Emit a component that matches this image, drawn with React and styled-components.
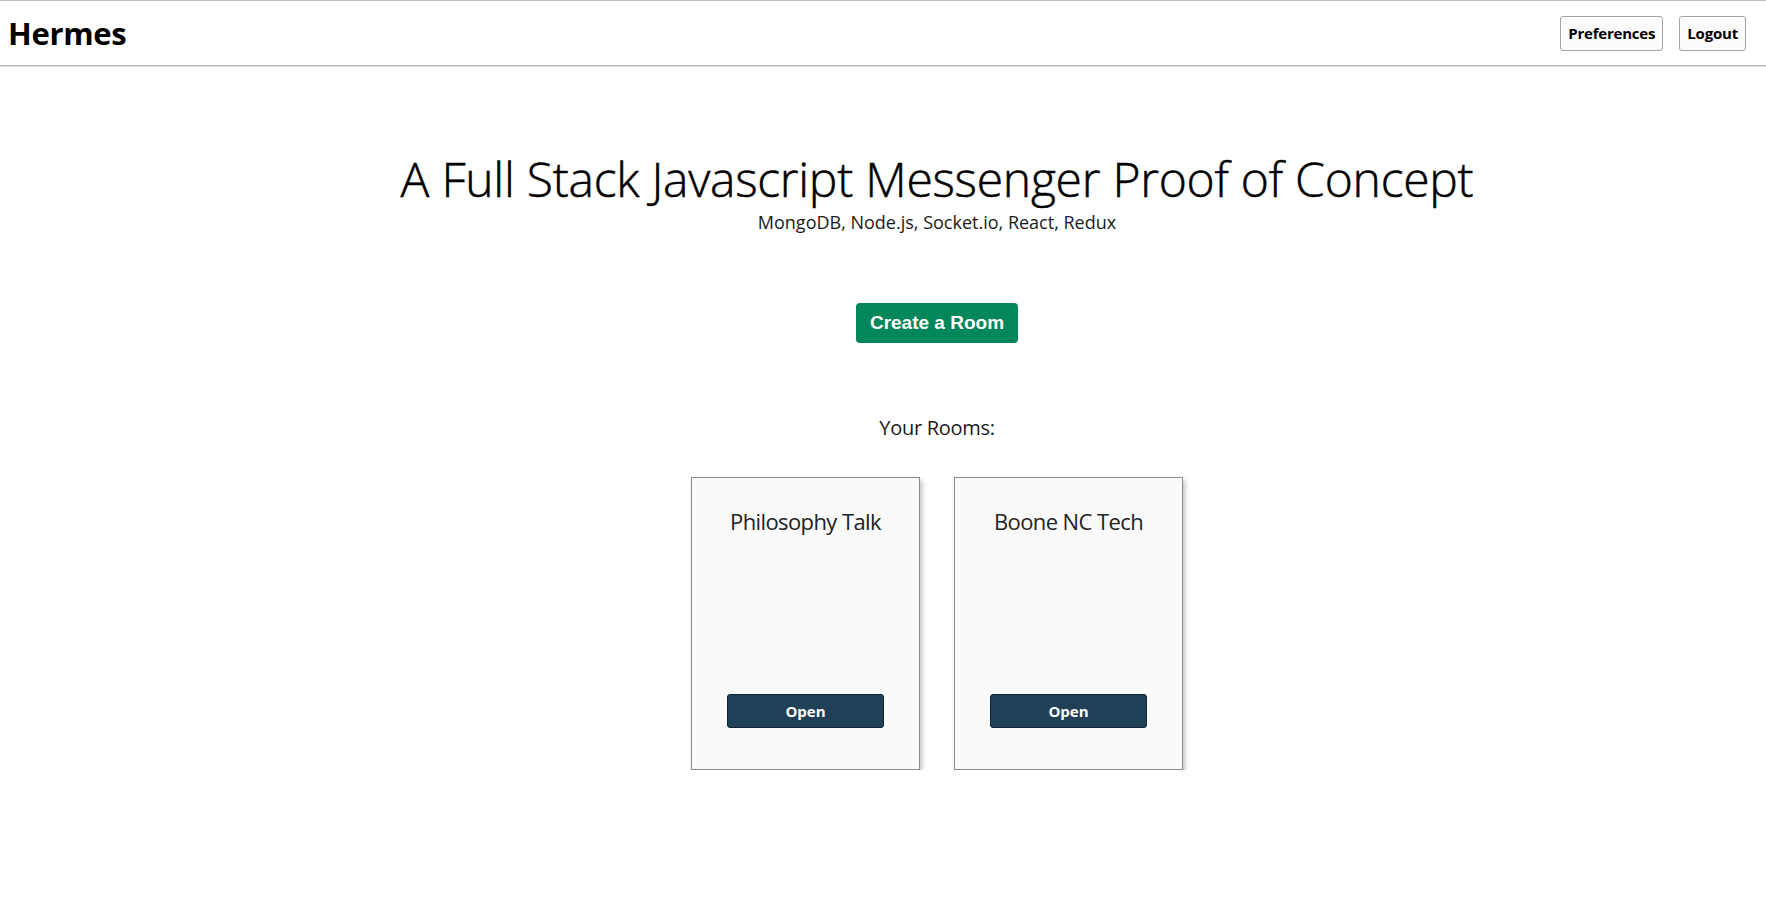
import React from "react";
import styled, { createGlobalStyle } from "styled-components";

const GlobalStyle = createGlobalStyle`
  html, body {
    margin: 0;
    padding: 0;
    background: #ffffff;
  }
  body {
    font-family: "Open Sans", "Noto Sans", sans-serif;
    color: #000;
  }
  * { box-sizing: border-box; }
`;

const Header = styled.header`
  display: flex;
  align-items: center;
  justify-content: space-between;
  height: 66px;
  padding: 0 20px 0 8px;
  border-top: 1px solid #bdbdbd;
  border-bottom: 1px solid #b3b3b3;
  box-shadow: 0 1px 0 #e2e2e2;
`;

const Brand = styled.div`
  font-size: 31px;
  font-weight: 700;
  letter-spacing: -0.3px;
  line-height: 1;
  margin-top: 1px;
`;

const Nav = styled.nav`
  display: flex;
  gap: 16px;
`;

const NavButton = styled.button`
  height: 35px;
  padding: 0 7px;
  border: 1px solid #a3a3a3;
  border-radius: 3px;
  background: #fbfbfb;
  font-family: "Open Sans", "Noto Sans", sans-serif;
  font-size: 15px;
  font-weight: 700;
  letter-spacing: -0.2px;
  color: #000;
  cursor: pointer;
`;

const Main = styled.main`
  display: flex;
  flex-direction: column;
  align-items: center;
  padding-left: 108px;
`;

const Title = styled.h1`
  margin: 84px 0 0;
  font-size: 48px;
  font-weight: 300;
  letter-spacing: -0.25px;
  line-height: 1.2;
  color: #000;
  -webkit-text-stroke: 0.5px #000;
`;

const Subtitle = styled.p`
  margin: 4px 0 0;
  font-size: 18px;
  font-weight: 400;
  line-height: 1.2;
  color: #1a1a1a;
`;

const CreateButton = styled.button`
  margin-top: 70px;
  height: 40px;
  padding: 0 14px;
  border: none;
  border-radius: 4px;
  background: #02875a;
  color: #fff;
  font-family: "Liberation Sans", Arial, sans-serif;
  font-size: 19px;
  font-weight: 700;
  cursor: pointer;
`;

const SectionLabel = styled.h2`
  margin: 72px 0 0;
  font-size: 20px;
  font-weight: 400;
  letter-spacing: -0.3px;
  line-height: 1.25;
  color: #1a1a1a;
`;

const RoomList = styled.div`
  display: flex;
  gap: 34px;
  margin-top: 37px;
`;

const RoomCard = styled.div`
  display: flex;
  flex-direction: column;
  align-items: center;
  justify-content: space-between;
  width: 229px;
  height: 293px;
  padding: 30px 0 41px;
  border: 1px solid #8c8c8c;
  background: #fafafa;
  box-shadow: 2px 3px 5px rgba(0, 0, 0, 0.25);
`;

const RoomName = styled.h3`
  margin: 0;
  font-size: 22px;
  font-weight: 400;
  letter-spacing: -0.6px;
  line-height: 1.2;
  color: #222;
`;

const OpenButton = styled.button`
  width: 157px;
  height: 34px;
  border: 1px solid #112535;
  border-radius: 3px;
  background: #1f4057;
  color: #fff;
  font-family: "Open Sans", "Noto Sans", sans-serif;
  font-size: 15px;
  font-weight: 700;
  cursor: pointer;
`;

const rooms = ["Philosophy Talk", "Boone NC Tech"];

export default function App() {
  return (
    <>
      <GlobalStyle />
      <Header>
        <Brand>Hermes</Brand>
        <Nav>
          <NavButton>Preferences</NavButton>
          <NavButton>Logout</NavButton>
        </Nav>
      </Header>
      <Main>
        <Title>A Full Stack Javascript Messenger Proof of Concept</Title>
        <Subtitle>MongoDB, Node.js, Socket.io, React, Redux</Subtitle>
        <CreateButton>Create a Room</CreateButton>
        <SectionLabel>Your Rooms:</SectionLabel>
        <RoomList>
          {rooms.map((r) => (
            <RoomCard key={r}>
              <RoomName>{r}</RoomName>
              <OpenButton>Open</OpenButton>
            </RoomCard>
          ))}
        </RoomList>
      </Main>
    </>
  );
}
